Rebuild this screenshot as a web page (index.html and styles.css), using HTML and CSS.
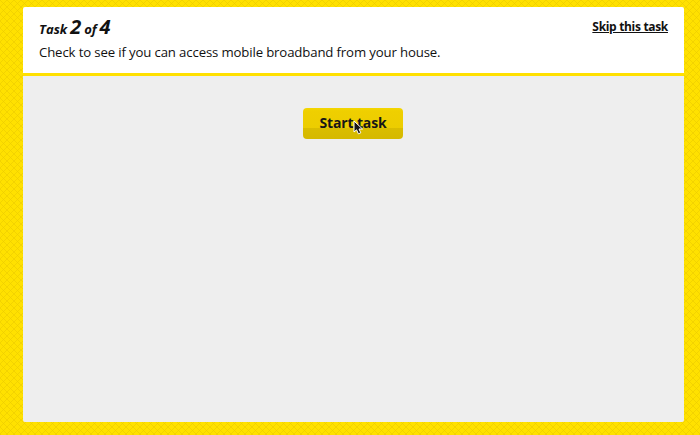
FILE: index.html
```html
<!DOCTYPE html>
<html lang="en">
<head>
<meta charset="utf-8">
<title>Task 2 of 4</title>
<link rel="stylesheet" href="styles.css">
</head>
<body>
<main class="panel">
  <header class="header">
    <div>
      <h1 class="title">Task <b>2</b> of <b>4</b></h1>
      <p class="description">Check to see if you can access mobile broadband from your house.</p>
    </div>
    <a class="skip" href="#">Skip this task</a>
  </header>
  <section class="stage">
    <button class="start" type="button">Start task
      <svg class="cursor" width="11" height="17" viewBox="0 0 11 17"><path d="M1 1V12L3.6 9.8L5.4 13.8L7.8 12.8L6 9H9.5Z" fill="#171717" stroke="#fff" stroke-width="1"/></svg>
    </button>
  </section>
</main>
</body>
</html>
```

FILE: styles.css
```css
* {
  box-sizing: border-box;
}

body {
  margin: 0;
  height: 435px;
  padding: 7px 16px 13px 23px;
  overflow: hidden;
  font-family: "Open Sans", "Noto Sans", sans-serif;
  color: #111;
  background-color: #ffe100;
  background-image:
    linear-gradient(45deg, transparent 43%, #ebcb0099 43% 57%, transparent 57%),
    linear-gradient(-45deg, transparent 43%, #ebcb0099 43% 57%, transparent 57%);
  background-size: 7px 7px;
}

.panel {
  height: 415px;
  display: flex;
  flex-direction: column;
  border-radius: 2px;
  overflow: hidden;
}

.header {
  height: 69px;
  display: flex;
  justify-content: space-between;
  padding: 7px 16px 0;
  background: #fff;
  border-bottom: 3px solid #ffe000;
}

.title {
  margin: 1px 0 0;
  font-size: 13px;
  line-height: 28px;
  font-style: italic;
  font-weight: 700;
  white-space: nowrap;
  word-spacing: -0.4px;
}

.title b {
  font-size: 20px;
  font-weight: 700;
  line-height: 1;
}

.description {
  margin: -1px 0 0;
  font-size: 13.2px;
  line-height: 20px;
  letter-spacing: -0.14px;
  white-space: nowrap;
}

.skip {
  margin-top: 4px;
  font-size: 12px;
  line-height: 18px;
  font-weight: 700;
  letter-spacing: -0.32px;
  color: inherit;
}

.stage {
  flex: 1;
  display: flex;
  justify-content: center;
  align-items: flex-start;
  padding: 32px 1px 0 0;
  background: #eee;
}

.start {
  position: relative;
  width: 100px;
  height: 31px;
  padding: 0 0 2px;
  border: 0;
  border-radius: 4px;
  font: 700 14px/20px "Open Sans", "Noto Sans", sans-serif;
  letter-spacing: -0.15px;
  color: #171717;
  white-space: nowrap;
  background: linear-gradient(#f4d700 0, #efcf00 3px, #eccd00 20px, #dabd00 20px, #d5b900 100%);
}

.cursor {
  position: absolute;
  left: 50px;
  top: 12px;
}
```
